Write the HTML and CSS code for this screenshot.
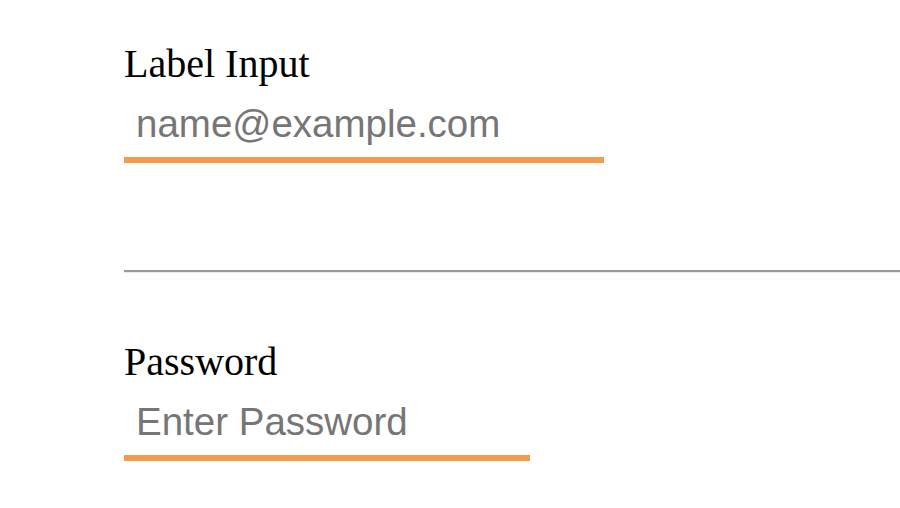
FILE: index.html
```html
<!DOCTYPE html>
<html>
<head>
<meta charset="utf-8">
<link rel="stylesheet" href="styles.css">
</head>
<body>
<form class="form">
  <div class="field">
    <label class="label" for="email">Label Input</label>
    <input class="input input-email" id="email" type="email" placeholder="name@example.com">
  </div>
  <hr class="divider">
  <div class="field field-password">
    <label class="label" for="pw">Password</label>
    <input class="input input-password" id="pw" type="password" placeholder="Enter Password">
  </div>
</form>
</body>
</html>
```

FILE: styles.css
```css
html, body {
  margin: 0;
  padding: 0;
  background: #ffffff;
}

.form {
  display: flex;
  flex-direction: column;
  padding: 41px 0 0 124px;
  margin: 0;
}

.field {
  display: flex;
  flex-direction: column;
  align-items: flex-start;
}

.label {
  display: block;
  font-family: "Liberation Serif", "Times New Roman", serif;
  font-size: 40px;
  line-height: 46px;
  color: #000000;
}

.input {
  display: block;
  box-sizing: border-box;
  margin: 0;
  border: none;
  border-bottom: 6px solid #f29b4a;
  border-radius: 0;
  outline: none;
  background: transparent;
  padding: 15px 0 11px 12px;
  height: 76px;
  font-family: "Liberation Sans", Arial, sans-serif;
  font-size: 38.5px;
  line-height: 44px;
  color: #000000;
}

.input::placeholder {
  color: #767676;
  opacity: 1;
}

.input-email {
  width: 480px;
}

.input-password {
  width: 406px;
}

.divider {
  margin: 107px 0 0 0;
  height: 0;
  border: none;
  border-top: 2px solid #9a9a9a;
  border-bottom: 1px solid #ebebeb;
}

.field-password {
  margin-top: 66px;
}
```
